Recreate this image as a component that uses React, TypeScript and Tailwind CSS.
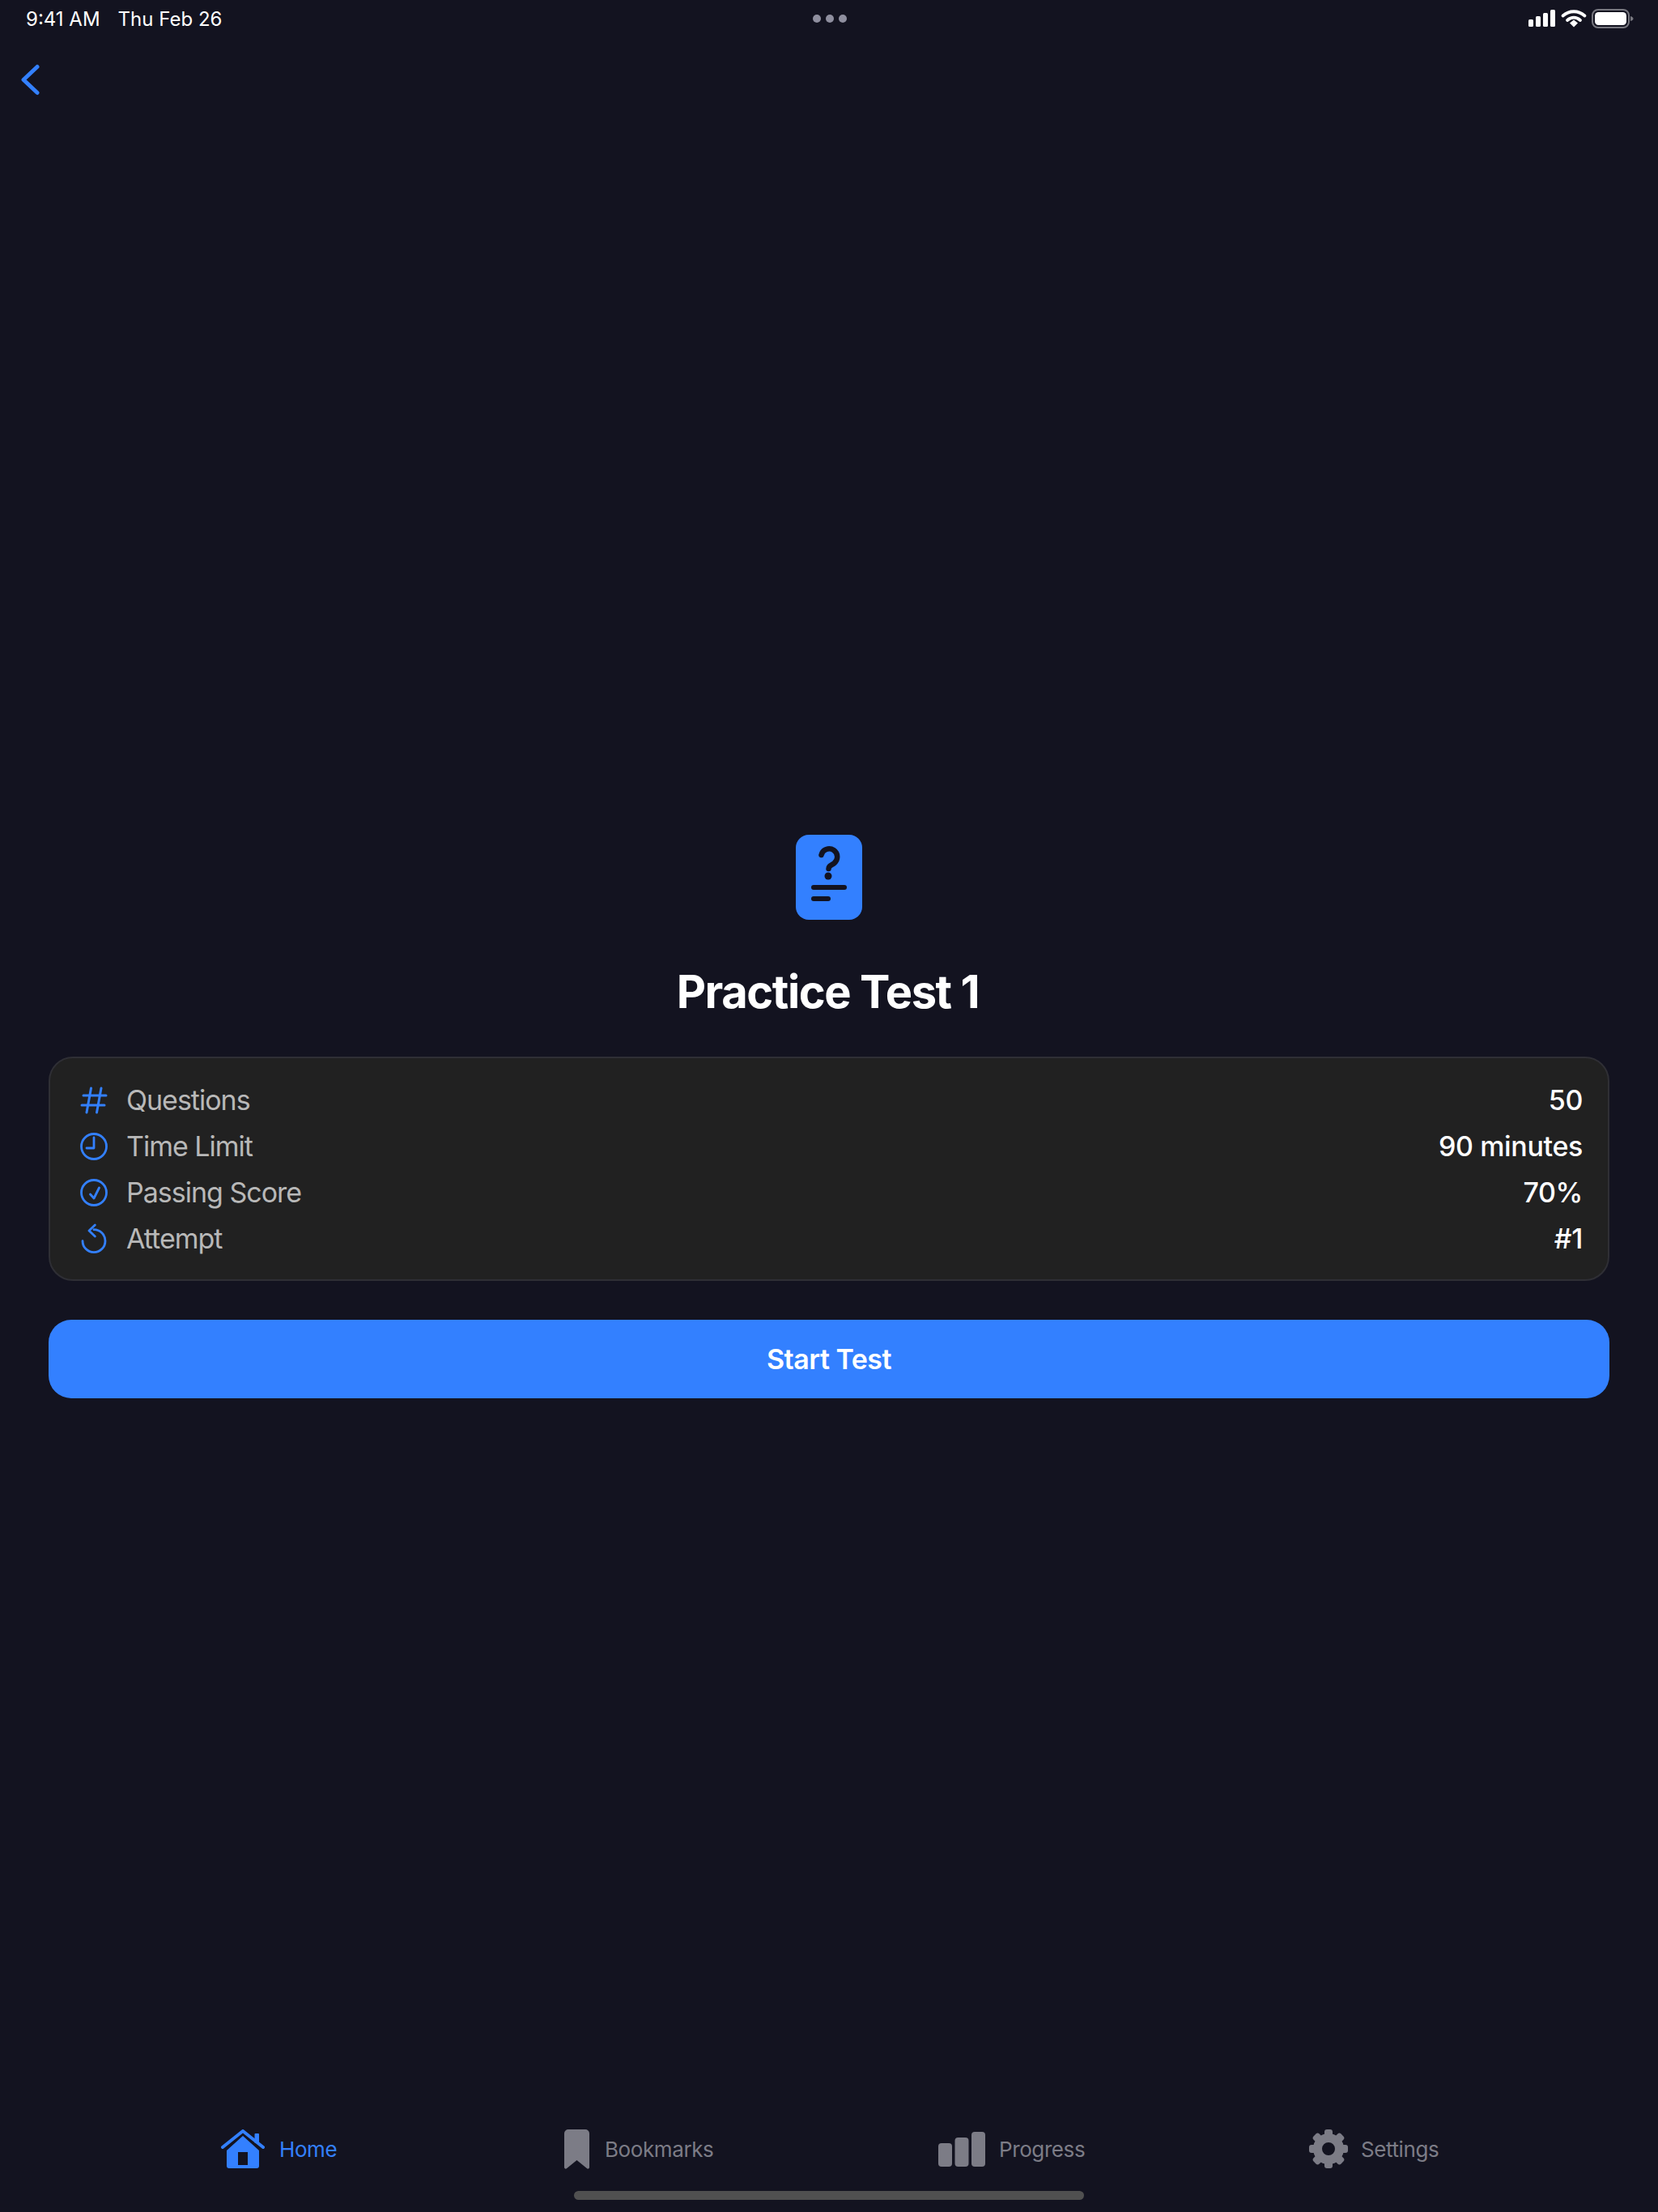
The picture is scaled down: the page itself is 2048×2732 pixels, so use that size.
const FONT = "font-['Inter','Liberation_Sans',sans-serif]";

const StatusIcons = () => (
  <svg width="130" height="24" viewBox="0 0 130 24" fill="none">
    <rect x="0" y="13" width="6" height="9" rx="1.5" fill="#fff" />
    <rect x="9" y="9" width="6" height="13" rx="1.5" fill="#fff" />
    <rect x="18" y="5" width="6" height="17" rx="1.5" fill="#fff" />
    <rect x="27" y="1" width="6" height="21" rx="1.5" fill="#fff" />
    <path d="M42.500 8.500c8-7 19-7 27 0" stroke="#fff" strokeWidth="3.800" strokeLinecap="round" />
    <path d="M48 14c5-4.400 11-4.400 16 0" stroke="#fff" strokeWidth="3.800" strokeLinecap="round" />
    <path d="M51 17.500 56 13.600l5 3.900L56 22.500z" fill="#fff" />
    <rect x="79" y="1" width="45" height="22" rx="7" stroke="#77777f" strokeWidth="2" />
    <rect x="82" y="4" width="39" height="16" rx="4.5" fill="#fff" />
    <path d="M126 9c2 .5 3.500 1.500 3.500 3s-1.500 2.500-3.500 3z" fill="#77777f" />
  </svg>
);

const TestDocIcon = () => (
  <svg width="82" height="105" viewBox="0 0 82 105" fill="none">
    <rect width="82" height="105" rx="16" fill="#3380ff" />
    <path
      d="M31.500 25A10 10 0 1 1 47 35.500C43 38 40.500 38.500 40.500 42"
      stroke="#131320"
      strokeWidth="6.500"
      strokeLinecap="round"
    />
    <circle cx="40" cy="51" r="4.500" fill="#131320" />
    <rect x="19" y="62" width="44" height="6" rx="3" fill="#131320" />
    <rect x="19" y="76" width="24" height="6" rx="3" fill="#131320" />
  </svg>
);

const HashIcon = () => (
  <svg width="34" height="34" viewBox="0 0 34 34" fill="none" stroke="#3380ff" strokeWidth="3" strokeLinecap="round">
    <path d="M13.500 2 8 32M26 2l-5.500 30M4 11h28M2 23h28" />
  </svg>
);

const ClockIcon = () => (
  <svg width="34" height="34" viewBox="0 0 34 34" fill="none" stroke="#3380ff" strokeWidth="2.800" strokeLinecap="round" strokeLinejoin="round">
    <circle cx="17" cy="17" r="15.500" />
    <path d="M17 6v13H8" />
  </svg>
);

const CheckIcon = () => (
  <svg width="34" height="34" viewBox="0 0 34 34" fill="none" stroke="#3380ff" strokeWidth="2.800" strokeLinecap="round" strokeLinejoin="round">
    <circle cx="17" cy="17" r="15.500" />
    <path d="m12.500 19 4.500 5 6.500-13" />
  </svg>
);

const RetryIcon = () => (
  <svg width="34" height="34" viewBox="0 0 34 34" fill="none" stroke="#3380ff" strokeWidth="2.800" strokeLinecap="round" strokeLinejoin="round" className="overflow-visible">
    <path d="M17 5.700A14 14 0 1 1 3 19.700" />
    <path d="M18.300 0 11 7l7.300 7" />
  </svg>
);

const HomeIcon = () => (
  <svg width="54" height="48" viewBox="0 0 54 48" fill="none">
    <rect x="41.500" y="5" width="5.500" height="12" rx="1" fill="#3380ff" />
    <path
      fillRule="evenodd"
      d="M27 8 47 26v19a3 3 0 0 1-3 3H10a3 3 0 0 1-3-3V26zM21 28v16h12V28z"
      fill="#3380ff"
    />
    <path d="M2 22 27 2l25 20" stroke="#3380ff" strokeWidth="4" strokeLinecap="round" strokeLinejoin="round" />
  </svg>
);

const BookmarkIcon = () => (
  <svg width="31" height="49" viewBox="0 0 31 49" fill="none">
    <path
      d="M5 0h21a5 5 0 0 1 5 5v41.500c0 2-1.800 3-3.200 1.500L15.500 38 3.200 48C1.800 49.500 0 48.500 0 46.500V5a5 5 0 0 1 5-5z"
      fill="#7c7c86"
    />
  </svg>
);

const BarsIcon = () => (
  <svg width="58" height="43" viewBox="0 0 58 43" fill="#7c7c86">
    <rect x="0" y="14" width="17" height="29" rx="4" />
    <rect x="20.500" y="7" width="17" height="36" rx="4" />
    <rect x="41" y="0" width="17" height="43" rx="4" />
  </svg>
);

const GearIcon = () => (
  <svg width="48" height="48" viewBox="0 0 48 48" fill="none">
    {[0, 45, 90, 135, 180, 225, 270, 315].map((a) => (
      <rect key={a} x="19" y="0" width="10" height="12" rx="3" fill="#7c7c86" transform={`rotate(${a} 24 24)`} />
    ))}
    <circle cx="24" cy="24" r="13.500" stroke="#7c7c86" strokeWidth="11" />
  </svg>
);

const ROWS = [
  { icon: <HashIcon />, label: "Questions", value: "50" },
  { icon: <ClockIcon />, label: "Time Limit", value: "90 minutes" },
  { icon: <CheckIcon />, label: "Passing Score", value: "70%" },
  { icon: <RetryIcon />, label: "Attempt", value: "#1" },
];

const TABS = [
  { icon: <HomeIcon />, label: "Home", gap: "gap-[18px]", active: true },
  { icon: <BookmarkIcon />, label: "Bookmarks", gap: "gap-[19px]" },
  { icon: <BarsIcon />, label: "Progress", gap: "gap-[17px]" },
  { icon: <GearIcon />, label: "Settings", gap: "gap-[16px]" },
];

export default function App() {
  return (
    <div className={`flex h-[2732px] w-[2048px] flex-col overflow-hidden bg-[#131320] ${FONT}`}>
      <div className="grid h-[46px] grid-cols-3 items-center pl-[32px] pr-[30px] text-[24px] text-white">
        <div className="flex gap-[22px] pt-[2px]">
          <span>9:41 AM</span>
          <span>Thu Feb 26</span>
        </div>
        <div className="flex justify-center gap-[6px]">
          <span className="size-[10px] rounded-full bg-[#8f8f9f]" />
          <span className="size-[10px] rounded-full bg-[#8f8f9f]" />
          <span className="size-[10px] rounded-full bg-[#8f8f9f]" />
        </div>
        <div className="flex justify-end">
          <StatusIcons />
        </div>
      </div>

      <div className="h-[94px] pl-[25px] pt-[33px]">
        <svg width="26" height="40" viewBox="0 0 26 40" fill="none">
          <path d="M21 3.500 4 19.500l17 16" stroke="#3380ff" strokeWidth="5" strokeLinecap="round" strokeLinejoin="round" />
        </svg>
      </div>

      <main className="flex flex-1 flex-col items-center justify-center px-[60px]">
        <TestDocIcon />
        <h1 className="mb-[46px] mt-[55px] pr-[3px] text-[56px] font-bold leading-[68px] tracking-[-1.4px] text-white">
          Practice Test 1
        </h1>
        <div className="w-full rounded-[30px] border-2 border-[#2f2f35] bg-[#212121] pb-[22px] pl-[37px] pr-[31px] pt-[23px]">
          {ROWS.map((row) => (
            <div key={row.label} className="flex h-[57px] items-center text-[34px]">
              <span className="mr-[23px] flex size-[34px] items-center justify-center">{row.icon}</span>
              <span className="tracking-[-1px] text-[#b8b8b8]">{row.label}</span>
              <span className="ml-auto font-medium tracking-[-0.35px] text-white">{row.value}</span>
            </div>
          ))}
        </div>
        <button className="mt-[48px] h-[97px] w-full rounded-[28px] bg-[#3380ff] text-[34px] font-semibold tracking-[-0.5px] text-white">
          Start Test
        </button>
      </main>

      <nav className="grid h-[72px] grid-cols-[424px_462px_458px_1fr] items-center pl-[273px]">
        {TABS.map((tab) => (
          <div key={tab.label} className={`flex items-center ${tab.gap}`}>
            {tab.icon}
            <span className={`text-[26px] tracking-[-0.4px] ${tab.active ? "text-[#3380ff]" : "text-[#7c7c86]"}`}>
              {tab.label}
            </span>
          </div>
        ))}
      </nav>
      <div className="mb-[15px] mt-[16px] flex justify-center">
        <div className="h-[11px] w-[630px] rounded-full bg-[#505050]" />
      </div>
    </div>
  );
}
